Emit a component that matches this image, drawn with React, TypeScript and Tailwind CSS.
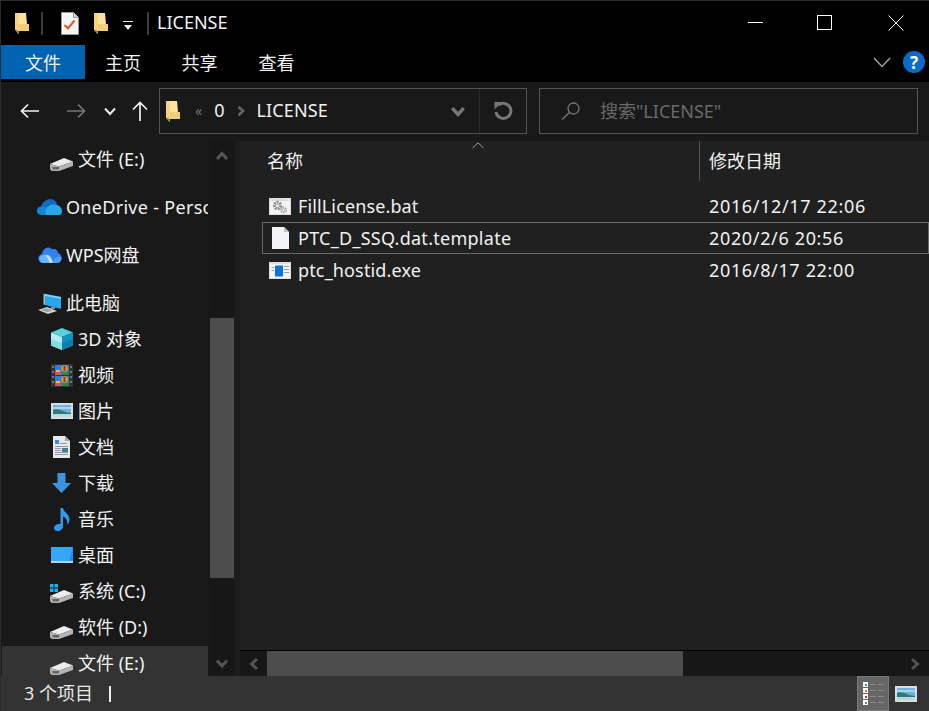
import React from "react";

const font = { fontFamily: '"Noto Sans", "Noto Sans CJK SC", sans-serif' };

const Folder = ({ w = 14, h = 21 }: { w?: number; h?: number }) => (
  <svg width={w} height={h} viewBox="0 0 14 21" className="shrink-0">
    <path d="M0 0H11L12 11H14V18H3.5V21L0 16.5Z" fill="#fbe39b" />
    <path d="M0 0H3.5V21L0 16.5Z" fill="#f4d47e" />
    <path d="M3.5 11H14V18H3.5Z" fill="#f1cf78" />
    <path d="M0 16.5L3.5 21V18Z" fill="#8f6c22" />
  </svg>
);

const DocCheck = () => (
  <svg width="18" height="23" viewBox="0 0 18 23" className="shrink-0">
    <path d="M0.5 0.5H12.5L17.5 5.5V22.5H0.5Z" fill="#f5f5f5" stroke="#9a9a9a" />
    <path d="M12.5 0.5V5.5H17.5" fill="#d5d5d5" stroke="#9a9a9a" />
    <path d="M3.5 13 L7 16.5 L13.5 8.5" fill="none" stroke="#e0562a" strokeWidth="2" />
  </svg>
);

const Drive = ({ win }: { win?: boolean }) => (
  <svg width="23" height="24" viewBox="0 0 23 24" className="mt-[1px] shrink-0">
    {win && (
      <g fill="#14b4f0">
        <rect x="0" y="4" width="3.5" height="3.5" />
        <rect x="4.5" y="4" width="3.5" height="3.5" />
        <rect x="0" y="8.5" width="3.5" height="3.5" />
        <rect x="4.5" y="8.5" width="3.5" height="3.5" />
      </g>
    )}
    <path d="M0 16 L14 10 L23 13.5 L9 18.5Z" fill="#ededed" />
    <path d="M0 16 L9 18.5 L23 13.5 V18 L9 23 H3 Q0 23 0 20Z" fill="#b4b4b4" />
    <path d="M2 19H9V21.5H3Z" fill="#5d6b5f" />
  </svg>
);

const OneDriveIcon = () => (
  <svg width="25" height="16" viewBox="0 0 25 16" className="shrink-0">
    <path d="M4 8 C5 3 10 0 13.5 0 C16.5 0 19 2 20 5 L12 11Z" fill="#0f6cc0" />
    <path d="M4 16 C-1.5 15.5 -1.5 8 4 7.5 L12 8 L18 16Z" fill="#0e86d8" />
    <path d="M9 16 L8 11 C10 7 14 5 18 5.5 C23 6 25 9.5 25 12 C25 14 24 16 22 16Z" fill="#2aa5ea" />
  </svg>
);

const WpsCloud = () => (
  <svg width="24" height="16" viewBox="0 0 24 16" className="shrink-0">
    <path d="M5 16 C-1 16 -1 8 4 7 C5 1 11 -1.5 14 2.5 C17 1 20 3 20 6 C25 7 25 16 19 16Z" fill="#2f82f5" />
    <path d="M1 11 C4 6 10 7 13 15 L12 16 H5 C3 16 1.5 14 1 11Z" fill="#6cb4fb" />
    <path d="M12 16 C10 12 9 9 7 8 C11 7 14 10 15 16Z" fill="#e8f3ff" opacity="0.75" />
    <path d="M15 16 C16 11 19 9 23 10 C24 13 22 16 19 16Z" fill="#4fa2fa" />
  </svg>
);

const Computer = () => (
  <svg width="24" height="21" viewBox="0 0 24 21" className="shrink-0">
    <path d="M7 1 L23 4 V16 L7 12Z" fill="#2ba4ee" />
    <path d="M7 1 L23 4 V6 L7 3Z" fill="#7fd0fb" />
    <path d="M7 1 L5.5 0.5 V11.5 L7 12 Z" fill="#aab6bf" />
    <path d="M13 14 H17 V16 H13Z" fill="#888" />
    <path d="M0 17 L9 14 L19 18 L10 21Z" fill="#cfcfcf" />
    <path d="M3 17 L9 15.5 L14 17.5 L9.5 19Z" fill="#9a9a9a" />
  </svg>
);

const Cube = () => (
  <svg width="22" height="22" viewBox="0 0 22 22" className="shrink-0">
    <path d="M11 0 L22 4.5 L11 9 L0 4.5Z" fill="#55d3d9" />
    <path d="M0 4.5 L11 9 V22 L0 17.5Z" fill="#b6eff0" />
    <path d="M22 4.5 L11 9 V22 L22 17.5Z" fill="#0f96c0" />
    <path d="M0 11 L11 15 V22 L0 17.5Z" fill="#7fdfe3" />
    <path d="M22 11 L11 15 V22 L22 17.5Z" fill="#0d7fa8" />
  </svg>
);

const FilmFrame = ({ y }: { y: number }) => (
  <g transform={`translate(0 ${y})`}>
    <rect x="4" y="0" width="14" height="10" fill="#2f7fd6" />
    <rect x="4" y="6" width="6" height="4" fill="#d34f7a" />
    <rect x="5" y="5" width="4" height="2" fill="#e8c23c" />
    <circle cx="13.5" cy="3.5" r="3.3" fill="#d8a21e" />
    <rect x="12.5" y="1" width="2" height="5" fill="#b3281e" />
    <rect x="11" y="7" width="7" height="3" fill="#2f8a3e" />
  </g>
);

const Film = () => (
  <svg width="22" height="23" viewBox="0 0 22 23" className="shrink-0">
    <rect width="22" height="23" fill="#333" />
    <FilmFrame y={1} />
    <FilmFrame y={12} />
    <g fill="#777">
      <rect x="1" y="2" width="2" height="2" /><rect x="1" y="7" width="2" height="2" /><rect x="1" y="12" width="2" height="2" /><rect x="1" y="17" width="2" height="2" />
      <rect x="19" y="2" width="2" height="2" /><rect x="19" y="7" width="2" height="2" /><rect x="19" y="12" width="2" height="2" /><rect x="19" y="17" width="2" height="2" />
    </g>
  </svg>
);

const Picture = ({ w = 22, h = 16 }: { w?: number; h?: number }) => (
  <svg width={w} height={h} viewBox="0 0 22 16" className="shrink-0">
    <rect width="22" height="16" fill="#dcdcdc" />
    <rect x="2" y="2" width="18" height="12" fill="#6fb2e6" />
    <path d="M2 4 H12 L20 4 V6 H2Z" fill="#a9d3f0" />
    <path d="M2 7 C6 5 10 7 13 8.5 C15 9.5 18 9.5 20 10 V11 H2Z" fill="#2f7a70" />
    <path d="M2 11 H20 V14 H2Z" fill="#b5d8e4" />
  </svg>
);

const DocImg = () => (
  <svg width="17" height="22" viewBox="0 0 17 22" className="shrink-0">
    <path d="M0 0H12L17 5V22H0Z" fill="#e9e9e9" />
    <path d="M12 0V5H17Z" fill="#a8a8a8" />
    <path d="M2 4H6V8H2Z" fill="#3a8fdc" />
    <path d="M7 7H14V8H7ZM2 10H15V11H2ZM2 12H8V13H2ZM2 14H8V15H2ZM2 16H15V17H2ZM2 18H15V19H2Z" fill="#8a9aa8" />
    <path d="M9 12H15V16H9Z" fill="#4a7a96" />
  </svg>
);

const Download = () => (
  <svg width="19" height="20" viewBox="0 0 19 20" className="shrink-0">
    <path d="M5.5 0H13.5V10H19L9.5 20L0 10H5.5Z" fill="#3b94e0" />
  </svg>
);

const Music = () => (
  <svg width="16" height="23" viewBox="0 0 16 23" className="shrink-0">
    <path d="M6.5 0H9C9.5 4 15.5 6 15.5 11.5C15.5 14 14.5 15.5 13 16.5C14 12.5 12 9.5 9 8.5V18.5C9 21 6.5 23 3.5 23C1 23 0 21.5 0 20C0 17.5 3 15.5 6.5 16Z" fill="#2d9cf0" />
  </svg>
);

const Desktop = () => (
  <svg width="22" height="16" viewBox="0 0 22 16" className="shrink-0">
    <rect width="22" height="16" fill="#1c8ef0" />
    <path d="M0 0H22L18 14H0Z" fill="#36a6f8" />
    <rect y="14" width="22" height="2" fill="#a5d6fa" />
  </svg>
);

const BatIcon = () => (
  <svg width="22" height="17" viewBox="0 0 22 17" className="shrink-0">
    <rect width="22" height="17" fill="#dcdcdc" />
    <rect x="1" y="3" width="20" height="13" fill="#f4f4f4" />
    <path d="M15 1H20" stroke="#fff" strokeDasharray="1 1" />
    <circle cx="8.5" cy="7.5" r="3" fill="none" stroke="#8e8e8e" strokeWidth="3.4" strokeDasharray="1.8 0.8" />
    <circle cx="14.5" cy="12" r="2.2" fill="none" stroke="#9fa6ac" strokeWidth="2.4" strokeDasharray="1.4 0.7" />
  </svg>
);

const BlankFile = () => (
  <svg width="17" height="22" viewBox="0 0 17 22" className="shrink-0">
    <path d="M0 0H12L17 5V22H0Z" fill="#f3f3f6" />
    <path d="M12 0V5H17Z" fill="#c4c4c4" />
  </svg>
);

const ExeIcon = () => (
  <svg width="22" height="17" viewBox="0 0 22 17" className="shrink-0">
    <rect width="22" height="17" fill="#dedede" />
    <rect x="1" y="2" width="20" height="14" fill="#f5f5f5" />
    <rect x="6" y="3.5" width="8" height="11" fill="#0a74da" />
    <path d="M2.5 5H5V6H2.5ZM2.5 8H5V9H2.5ZM15 4H20V5H15ZM15 7H20V8H15ZM15 10H20V11H15Z" fill="#9a9a9a" />
  </svg>
);

const Chevron = ({ dir, color = "#555", size = 14, sw = 3 }: { dir: "up" | "down" | "left" | "right"; color?: string; size?: number; sw?: number }) => {
  const d = {
    up: "M2 10 L7 4.5 L12 10",
    down: "M2 4.5 L7 10 L12 4.5",
    left: "M10 2 L4.5 7 L10 12",
    right: "M4 2 L9.5 7 L4 12",
  }[dir];
  return (
    <svg width={size} height={size} viewBox="0 0 14 14" className="shrink-0">
      <path d={d} fill="none" stroke={color} strokeWidth={sw} />
    </svg>
  );
};

const navItems = [
  { label: "文件 (E:)", icon: <Drive />, child: true, gap: false },
  { label: "OneDrive - Personal", icon: <OneDriveIcon />, child: false, gap: true, wide: true },
  { label: "WPS网盘", icon: <WpsCloud />, child: false, gap: true },
  { label: "此电脑", icon: <Computer />, child: false, gap: true },
  { label: "3D 对象", icon: <Cube />, child: true, gap: false },
  { label: "视频", icon: <Film />, child: true, gap: false },
  { label: "图片", icon: <Picture />, child: true, gap: false },
  { label: "文档", icon: <DocImg />, child: true, gap: false },
  { label: "下载", icon: <Download />, child: true, gap: false },
  { label: "音乐", icon: <Music />, child: true, gap: false },
  { label: "桌面", icon: <Desktop />, child: true, gap: false },
  { label: "系统 (C:)", icon: <Drive win />, child: true, gap: false },
  { label: "软件 (D:)", icon: <Drive />, child: true, gap: false },
  { label: "文件 (E:)", icon: <Drive />, child: true, gap: false, active: true },
];

const files = [
  { name: "FillLicense.bat", date: "2016/12/17 22:06", icon: <BatIcon />, nameClass: "tracking-[0.13px]" },
  { name: "PTC_D_SSQ.dat.template", date: "2020/2/6 20:56", icon: <BlankFile />, focused: true, nameClass: "tracking-[0.27px]" },
  { name: "ptc_hostid.exe", date: "2016/8/17 22:00", icon: <ExeIcon />, nameClass: "tracking-[0.15px]" },
];

const App: React.FC = () => {
  return (
    <div style={font} className="relative flex h-[711px] w-[929px] flex-col overflow-hidden bg-black text-[18px] leading-none text-[#f2f2f2]">
      <div className="absolute left-0 top-0 z-10 h-full w-px bg-[#2b2b2b]" />
      {/* title bar */}
      <div className="flex h-[45px] shrink-0 items-center border-t border-[#2b2b2b]">
        <div className="ml-[15px]"><Folder /></div>
        <div className="ml-[12px] h-[23px] w-[2px] bg-[#3c3c3c]" />
        <div className="ml-[18px]"><DocCheck /></div>
        <div className="ml-[15px]"><Folder /></div>
        <svg width="10" height="11" viewBox="0 0 10 11" className="ml-[15px] mt-[4px] shrink-0">
          <path d="M0 1H10V2H0ZM1 5H9L5 10Z" fill="#eee" />
        </svg>
        <div className="ml-[14px] h-[23px] w-[2px] bg-[#3c3c3c]" />
        <span className="mb-[2px] ml-[8px]">LICENSE</span>
        <div className="ml-auto flex items-center">
          <svg width="16" height="16" viewBox="0 0 16 16" className="mr-[53px]"><path d="M0 7.5H15" stroke="#fff" /></svg>
          <svg width="16" height="16" viewBox="0 0 16 16" className="mr-[55px]"><rect x="0.5" y="0.5" width="14" height="14" fill="none" stroke="#fff" /></svg>
          <svg width="16" height="16" viewBox="0 0 16 16" className="mr-[25px]"><path d="M0.5 0.5L15.5 15.5M15.5 0.5L0.5 15.5" stroke="#fff" /></svg>
        </div>
      </div>

      {/* ribbon tabs */}
      <div className="flex h-[37px] shrink-0 items-start pl-[1px]">
        <div className="flex h-[34px] w-[84px] items-center justify-center bg-[#0063b1] pt-[1px]">文件</div>
        <div className="flex h-[34px] w-[76px] items-center justify-center pt-[1px]">主页</div>
        <div className="flex h-[34px] w-[77px] items-center justify-center pt-[1px]">共享</div>
        <div className="flex h-[34px] w-[77px] items-center justify-center pt-[1px]">查看</div>
        <div className="ml-auto flex h-[34px] items-center">
          <svg width="18" height="11" viewBox="0 0 18 11"><path d="M1 1L9 9.5L17 1" fill="none" stroke="#a0a0a0" strokeWidth="1.5" /></svg>
          <div className="ml-[12px] mr-[4px] flex h-[22px] w-[22px] items-center justify-center rounded-full bg-[#0a6cc6] text-[17px] font-bold text-white">?</div>
        </div>
      </div>

      {/* address and search */}
      <div className="flex h-[59px] shrink-0 items-center bg-[#191919] pb-[1px]">
        <svg width="20" height="16" viewBox="0 0 20 16" className="ml-[20px]"><path d="M19 8H1.5M8 1.5L1.5 8L8 14.5" fill="none" stroke="#f2f2f2" strokeWidth="1.7" /></svg>
        <svg width="20" height="16" viewBox="0 0 20 16" className="ml-[26px]"><path d="M1 8H18.5M12 1.5L18.5 8L12 14.5" fill="none" stroke="#777" strokeWidth="1.7" /></svg>
        <div className="ml-[17px]"><Chevron dir="down" color="#eee" sw={2} /></div>
        <svg width="16" height="20" viewBox="0 0 16 20" className="ml-[15px]"><path d="M8 20V1.5M1 8.5L8 1.5L15 8.5" fill="none" stroke="#f2f2f2" strokeWidth="1.7" /></svg>
        <div className="ml-[11px] flex h-[46px] w-[368px] items-center border border-[#555]">
          <div className="ml-[6px]"><Folder /></div>
          <span className="ml-[15px] pb-[1px] text-[14px] text-[#777]">«</span>
          <span className="ml-[12px] pb-[2px]">0</span>
          <div className="ml-[11px]"><Chevron dir="right" color="#666" size={12} /></div>
          <span className="ml-[9px] pb-[2px] tracking-[0.15px]">LICENSE</span>
          <div className="ml-auto mr-[13px]"><Chevron dir="down" color="#777" sw={3} size={16} /></div>
          <div className="h-full w-px bg-[#2a2a2a]" />
          <svg width="20" height="20" viewBox="0 0 20 20" className="mx-[13px]">
            <path d="M5.5 4.2A7.5 7.5 0 1 1 3 11" fill="none" stroke="#777" strokeWidth="3" />
            <path d="M1.5 1H9L1.5 8.5Z" fill="#777" />
          </svg>
        </div>
        <div className="ml-[12px] flex h-[46px] w-[379px] items-center border border-[#555]">
          <svg width="20" height="18" viewBox="0 0 20 18" className="ml-[21px]">
            <circle cx="12.5" cy="6.5" r="5.5" fill="none" stroke="#777" strokeWidth="1.3" />
            <path d="M8.5 10.5L1 17.5" stroke="#777" strokeWidth="1.5" />
          </svg>
          <span className="ml-[19px] pb-[1px] text-[#6a6a6a]">搜索"LICENSE"</span>
        </div>
      </div>

      {/* body */}
      <div className="flex min-h-0 flex-1">
        {/* tree */}
        <div className="w-[210px] shrink-0 overflow-hidden whitespace-nowrap bg-[#191919] pl-[2px]">
          {navItems.map((item, i) => (
            <div
              key={i}
              className={`flex h-[36px] w-[206px] items-center overflow-hidden pb-[2px] ${item.gap ? "mt-[12px]" : ""} ${i === 0 ? "mt-[1px]" : ""} ${item.active ? "bg-[#333]" : ""}`}
            >
              <div className={`flex w-[25px] shrink-0 justify-center ${item.child ? "ml-[47px]" : "ml-[35px]"}`}>{item.icon}</div>
              <span className={`ml-[4px] ${item.wide ? "tracking-[0.3px]" : ""}`}>{item.label}</span>
            </div>
          ))}
        </div>
        <div className="flex w-[24px] shrink-0 flex-col items-center bg-[#171717]">
          <div className="mt-[8px]"><Chevron dir="up" /></div>
          <div className="mt-[155px] h-[260px] w-full shrink-0 bg-[#4d4d4d]" />
          <div className="mt-[78px]"><Chevron dir="down" /></div>
        </div>
        <div className="w-[6px] shrink-0 bg-[#1c1c1c]" />

        {/* file list */}
        <div className="relative flex min-w-0 flex-1 flex-col bg-[#202020]">
          <svg width="12" height="7" viewBox="0 0 12 7" className="absolute left-[232px] top-[1px]"><path d="M0.5 6L6 0.8L11.5 6" fill="none" stroke="#aaa" /></svg>
          <div className="flex h-[40px] shrink-0 items-center">
            <div className="w-[459px] pl-[27px]">名称</div>
            <div className="flex h-full items-center border-l border-[#555] pl-[9px]">修改日期</div>
          </div>
          <div className="mt-[9px] flex-1">
            {files.map((f) => (
              <div key={f.name} className={`ml-[22px] flex h-[32px] items-center border ${f.focused ? "border-[#6a6a6a]" : "border-transparent"}`}>
                <div className="ml-[6px] flex w-[22px] shrink-0 justify-center">{f.icon}</div>
                <div className={`ml-[7px] w-[411px] shrink-0 ${f.nameClass}`}>{f.name}</div>
                <div className="whitespace-nowrap tracking-[0.65px]">{f.date}</div>
              </div>
            ))}
          </div>
          <div className="flex h-[26px] shrink-0 items-center border-t border-black bg-[#171717]">
            <div className="ml-[7px]"><Chevron dir="left" /></div>
            <div className="ml-[6px] h-full w-[416px] bg-[#4d4d4d]" />
            <div className="ml-auto mr-[7px]"><Chevron dir="right" /></div>
          </div>
        </div>
      </div>

      {/* status bar */}
      <div className="flex h-[35px] shrink-0 items-center bg-[#333] text-[#e8e8e8]">
        <span className="ml-[24px] pb-[1px]">3 个项目</span>
        <div className="ml-[16px] h-[16px] w-[2px] bg-[#eee]" />
        <div className="ml-auto flex h-full w-[32px] flex-col justify-center gap-[1px] border border-[#7a7a7a] bg-[#666] pl-[5px]">
          {["#4a90a8", "#b09030", "#c04020", "#6090a0"].map((c) => (
            <div key={c} className="flex items-center gap-[1px]">
              <div className="flex h-[5px] w-[5px] items-center justify-center bg-white"><div className="h-[2px] w-[2px]" style={{ background: c }} /></div>
              <div className="ml-[1px] h-px w-[6px] bg-[#8a8a8a]" />
              <div className="ml-[1px] h-px w-[6px] bg-[#8a8a8a]" />
            </div>
          ))}
        </div>
        <div className="ml-[6px] mr-[12px]"><Picture /></div>
      </div>
    </div>
  );
};

export default App;
